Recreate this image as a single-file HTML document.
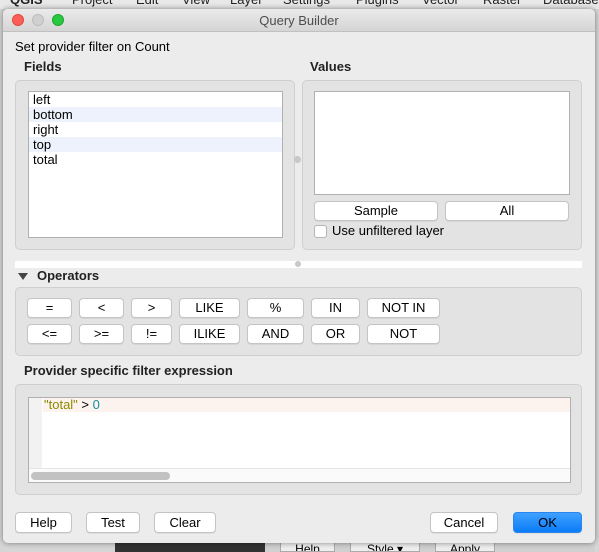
<!DOCTYPE html>
<html><head><meta charset="utf-8"><style>
*{box-sizing:border-box;margin:0;padding:0}
body{width:599px;height:552px;overflow:hidden;position:relative;background:#d6d6d6;font-family:"Liberation Sans",Arial,sans-serif;font-size:13px;color:#000}
.a{position:absolute}
.menu{left:0;top:0;width:599px;height:9px;background:#e8e8e8;overflow:hidden}
.menu span{position:absolute;top:-8px;font-size:13px;color:#222}
.win{left:3px;top:9px;width:592px;height:534px;background:#ececec;border-radius:5px;box-shadow:0 0 6px rgba(0,0,0,.45);overflow:hidden}
.tb{left:0;top:0;width:592px;height:23px;background:linear-gradient(#ebebeb,#d5d5d5);border-bottom:1px solid #c0c0c0;text-align:center;line-height:23px;font-size:13px;color:#4d4d4d}
.dot{width:12px;height:12px;border-radius:50%;top:5px}
.grp{background:#e3e3e3;border:1px solid #cfcfcf;border-radius:5px}
.list{background:#fff;border:1px solid #b0b0b0}
.btn{background:#fff;border:1px solid #c4c4c4;border-radius:4px;text-align:center;box-shadow:0 1px 0 rgba(0,0,0,.06);font-size:13px}
.b{font-weight:bold;font-size:13px;color:#222}
.row{position:absolute;left:0;width:100%;height:15px;padding-left:4px;line-height:15px}
</style></head><body>
<div class="a menu"><span style="left:10px;font-weight:bold">QGIS</span><span style="left:72px">Project</span><span style="left:136px">Edit</span><span style="left:182px">View</span><span style="left:230px">Layer</span><span style="left:283px">Settings</span><span style="left:356px">Plugins</span><span style="left:422px">Vector</span><span style="left:483px">Raster</span><span style="left:543px">Database</span></div>
<div class="a" style="left:115px;top:543px;width:150px;height:9px;background:#333"></div>
<div class="a" style="left:265px;top:543px;width:330px;height:9px;background:#d0d0d0"></div>
<div class="a" style="left:280px;top:541px;width:55px;height:11px;border:1px solid #aaa;background:#eee;font-size:12px;text-align:center;line-height:14px;overflow:hidden">Help</div>
<div class="a" style="left:350px;top:541px;width:70px;height:11px;border:1px solid #aaa;background:#eee;font-size:12px;text-align:center;line-height:14px;overflow:hidden">Style ▾</div>
<div class="a" style="left:435px;top:541px;width:60px;height:11px;border:1px solid #aaa;background:#eee;font-size:12px;text-align:center;line-height:14px;overflow:hidden">Apply</div>
<div class="a win">
 <div class="a tb">Query Builder</div>
 <div class="a dot" style="left:9px;background:#fc5f57;border:1px solid #de4a42"></div>
 <div class="a dot" style="left:29px;background:#d0d0d0;border:1px solid #bcbcbc"></div>
 <div class="a dot" style="left:49px;background:#28c840;border:1px solid #1fa631"></div>
 <div class="a" style="left:12px;top:30px">Set provider filter on Count</div>
 <div class="a b" style="left:21px;top:50px">Fields</div>
 <div class="a b" style="left:307px;top:50px">Values</div>
 <div class="a grp" style="left:12px;top:71px;width:280px;height:170px"></div>
 <div class="a list" style="left:25px;top:82px;width:255px;height:147px">
  <div class="row" style="top:0">left</div>
  <div class="row" style="top:15px;background:#edf2fc">bottom</div>
  <div class="row" style="top:30px">right</div>
  <div class="row" style="top:45px;background:#edf2fc">top</div>
  <div class="row" style="top:60px">total</div>
 </div>
 <div class="a" style="left:291px;top:147px;width:7px;height:7px;border-radius:50%;background:#c8c8c8"></div>
 <div class="a grp" style="left:299px;top:71px;width:280px;height:170px"></div>
 <div class="a list" style="left:311px;top:82px;width:256px;height:104px"></div>
 <div class="a btn" style="left:311px;top:192px;width:124px;height:20px;line-height:18px">Sample</div>
 <div class="a btn" style="left:442px;top:192px;width:124px;height:20px;line-height:18px">All</div>
 <div class="a" style="left:311px;top:216px;width:13px;height:13px;background:#fff;border:1px solid #b4b4b4;border-radius:3px"></div>
 <div class="a" style="left:329px;top:214px">Use unfiltered layer</div>
 <div class="a" style="left:12px;top:252px;width:567px;height:7px;background:#fff"></div>
 <div class="a" style="left:292px;top:252px;width:6px;height:6px;border-radius:50%;background:#c8c8c8"></div>
 <div class="a" style="left:15px;top:264px;width:0;height:0;border-left:5px solid transparent;border-right:5px solid transparent;border-top:7px solid #444"></div>
 <div class="a b" style="left:34px;top:259px">Operators</div>
 <div class="a grp" style="left:12px;top:278px;width:567px;height:69px"></div>
 <div class="a btn" style="left:24px;top:289px;width:45px;height:20px;line-height:18px">=</div>
 <div class="a btn" style="left:76px;top:289px;width:45px;height:20px;line-height:18px">&lt;</div>
 <div class="a btn" style="left:128px;top:289px;width:41px;height:20px;line-height:18px">&gt;</div>
 <div class="a btn" style="left:176px;top:289px;width:61px;height:20px;line-height:18px">LIKE</div>
 <div class="a btn" style="left:244px;top:289px;width:57px;height:20px;line-height:18px">%</div>
 <div class="a btn" style="left:308px;top:289px;width:49px;height:20px;line-height:18px">IN</div>
 <div class="a btn" style="left:364px;top:289px;width:73px;height:20px;line-height:18px">NOT IN</div>
 <div class="a btn" style="left:24px;top:315px;width:45px;height:20px;line-height:18px">&lt;=</div>
 <div class="a btn" style="left:76px;top:315px;width:45px;height:20px;line-height:18px">&gt;=</div>
 <div class="a btn" style="left:128px;top:315px;width:41px;height:20px;line-height:18px">!=</div>
 <div class="a btn" style="left:176px;top:315px;width:61px;height:20px;line-height:18px">ILIKE</div>
 <div class="a btn" style="left:244px;top:315px;width:57px;height:20px;line-height:18px">AND</div>
 <div class="a btn" style="left:308px;top:315px;width:49px;height:20px;line-height:18px">OR</div>
 <div class="a btn" style="left:364px;top:315px;width:73px;height:20px;line-height:18px">NOT</div>
 <div class="a b" style="left:21px;top:354px">Provider specific filter expression</div>
 <div class="a grp" style="left:12px;top:375px;width:567px;height:111px"></div>
 <div class="a list" style="left:25px;top:388px;width:543px;height:86px;overflow:hidden">
  <div class="a" style="left:0;top:0;width:13px;height:84px;background:#f2f2f2"></div>
  <div class="a" style="left:14px;top:0;width:528px;height:14px;background:#fcf3ee"></div>
  <div class="a" style="left:15px;top:0;line-height:14px"><span style="color:#8b8b00">"total"</span> &gt; <span style="color:#0f8fa0">0</span></div>
  <div class="a" style="left:0;top:70px;width:543px;height:15px;background:#fafafa;border-top:1px solid #e6e6e6"></div>
  <div class="a" style="left:2px;top:74px;width:139px;height:8px;border-radius:4px;background:#c2c2c2"></div>
 </div>
 <div class="a btn" style="left:12px;top:503px;width:57px;height:21px;line-height:19px">Help</div>
 <div class="a btn" style="left:83px;top:503px;width:54px;height:21px;line-height:19px">Test</div>
 <div class="a btn" style="left:151px;top:503px;width:62px;height:21px;line-height:19px">Clear</div>
 <div class="a btn" style="left:427px;top:503px;width:68px;height:21px;line-height:19px">Cancel</div>
 <div class="a btn" style="left:510px;top:503px;width:69px;height:21px;line-height:19px;background:linear-gradient(#3fa0ff,#0a7cf7);border-color:#2a86ee;color:#000">OK</div>
</div>
</body></html>
